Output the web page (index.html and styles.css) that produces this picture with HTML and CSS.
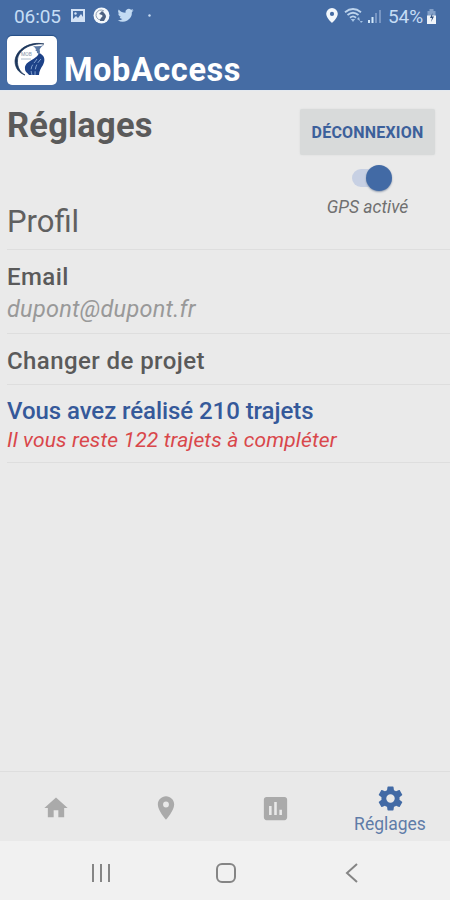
FILE: index.html
```html
<!DOCTYPE html>
<html lang="fr">
<head>
<meta charset="utf-8">
<title>MobAccess</title>
<link rel="stylesheet" href="styles.css">
</head>
<body>
<header class="header">
  <div class="status">
    <span class="time">06:05</span>
    <svg class="status-left" width="86" height="20" viewBox="0 0 86 20">
      <path fill="#d3e2f5" fill-rule="evenodd" d="M1 3h14v13H1zM3 5v9h10V5z"/>
      <path fill="#d3e2f5" d="M3 13l3-3 2 2 3-4 2 3v3H3z"/><circle cx="5.500" cy="7.500" r="1.200" fill="#d3e2f5"/>
      <circle cx="31.500" cy="9.500" r="8" fill="#f4f8fc"/>
      <path d="M34 5a5 5 0 1 0-3 9" fill="none" stroke="#8b9bb0" stroke-width="1"/>
      <path d="M32 5c2 2 4 3 4 6l-2 4h-4c0-4 4-4 2-6l-3-1z" fill="#4d6180"/>
      <path transform="translate(47 .8) scale(.72)" fill="#c3dbf3" d="M23 4.900a9 9 0 0 1-2.600.7 4.500 4.500 0 0 0 2-2.500 9 9 0 0 1-2.900 1.100A4.500 4.500 0 0 0 11.800 8.300 12.900 12.900 0 0 1 2.400 3.600a4.500 4.500 0 0 0 1.400 6.100 4.500 4.500 0 0 1-2-.6 4.500 4.500 0 0 0 3.600 4.500 4.500 4.500 0 0 1-2 .1 4.500 4.500 0 0 0 4.200 3.100A9 9 0 0 1 1 18.700a12.800 12.800 0 0 0 19.700-11.400A9 9 0 0 0 23 4.900z"/>
      <circle cx="79.500" cy="9.500" r="1.200" fill="#c8dbf1"/>
    </svg>
    <svg class="status-right" width="56" height="20" viewBox="0 0 56 20">
      <path fill="#f2f7fc" fill-rule="evenodd" d="M7 2a5.800 5.800 0 0 0-5.800 5.800C1.200 12 7 17 7 17s5.800-5 5.800-9.200A5.800 5.800 0 0 0 7 2zM7 5.800a2.100 2.100 0 1 1 0 4.200 2.100 2.100 0 0 1 0-4.200z"/>
      <g fill="none" stroke="#bdd4ed" stroke-width="1.800"><path d="M20 6.300q8-6.500 16 0M22.500 9q5.500-4.600 11 0M25 11.700q3-2.600 6 0"/></g>
      <path d="M25.800 13h4.400L28 16zM32 13l2-2 1 4zM35 15h3l-2 2z" fill="#a5c3e5"/>
      <path d="M43 14h2v3h-2zM46.500 11h2v6h-2z" fill="#d2e8fa"/><path d="M50 7h2v10h-2zM54 4h2v13h-2z" fill="#7896c3"/>
    </svg>
    <span class="percent">54%</span>
    <svg class="battery" width="11" height="18" viewBox="0 0 11 18">
      <path d="M3.500 2h4v2h2v5h-8V4h2z" fill="#829fc8"/><path d="M1 8.500h9V17H1z" fill="#f1f5fa"/><path d="M6.500 6L4 11h2l-1 4 3-5.500H6z" fill="#304f7d"/>
    </svg>
  </div>
  <div class="brand">
    <div class="logo">
      <svg width="36" height="38" viewBox="0 0 36 38">
        <path d="M32 3C18 0 4 8 3 20c0 7 4 12 10 14C8 31 5 26 5.500 19 6 9 18 2 32 3z" fill="#1c365b" stroke="#1c365b" stroke-width=".7"/>
        <path d="M23 9c5 2 4 5 1 7-5 4-12 6-11 12 0 3 3 4 4 6h10c0-4 2-7 4-10 3-6 1-10-4-12 2-3-1-4-4-3z" fill="#1d4288"/>
        <path d="M21 5q6 1 11-1-6 3-4 9l-3-1q0-4-4-7z" fill="#5c7aa5"/>
        <path d="M25 18c-3 5-8 7-5 16M29 18c-5 5-6 9-6 16" fill="none" stroke="#9bb9df" stroke-width=".8" stroke-dasharray="5 2"/>
        <text x="9" y="15" class="logo-text">MOB</text><path d="M9 18h10" stroke="#aabacb"/>
      </svg>
    </div>
    <h1 class="brand-name">MobAccess</h1>
  </div>
</header>
<main class="main">
  <section class="top">
    <div class="titles">
      <h2 class="title">Réglages</h2>
      <h3 class="subtitle">Profil</h3>
    </div>
    <div class="actions">
      <button class="logout">DÉCONNEXION</button>
      <div class="switch"><span class="knob"></span></div>
      <div class="gps">GPS activé</div>
    </div>
  </section>
  <section class="row email-row">
    <div class="label email-label">Email</div>
    <div class="email">dupont@dupont.fr</div>
  </section>
  <section class="row project-row"><div class="label project">Changer de projet</div></section>
  <section class="row trips-row">
    <div class="label trips">Vous avez réalisé 210 trajets</div>
    <div class="remaining">Il vous reste 122 trajets à compléter</div>
  </section>
</main>
<nav class="tabs">
  <div class="tab"><svg width="28" height="28" viewBox="0 0 24 24"><path d="M10 20v-6h4v6h5v-8h3L12 3 2 12h3v8z"/></svg></div>
  <div class="tab"><svg width="28" height="28" viewBox="0 0 24 24"><path d="M12 2C8.130 2 5 5.130 5 9c0 5.250 7 13 7 13s7-7.750 7-13c0-3.870-3.130-7-7-7zm0 9.500a2.500 2.500 0 0 1 0-5 2.500 2.500 0 0 1 0 5z"/></svg></div>
  <div class="tab"><svg width="31" height="31" viewBox="0 0 24 24"><path d="M19 3H5c-1.100 0-2 .9-2 2v14c0 1.100.9 2 2 2h14c1.100 0 2-.9 2-2V5c0-1.100-.9-2-2-2zM9 17H7v-7h2v7zm4 0h-2V7h2v10zm4 0h-2v-4h2v4z"/></svg></div>
  <div class="tab active">
    <svg width="29" height="29" viewBox="0 0 24 24"><path d="M19.430 12.980c.04-.32.07-.64.07-.98s-.03-.66-.07-.98l2.110-1.650c.19-.15.24-.42.12-.64l-2-3.460c-.12-.22-.39-.3-.61-.22l-2.490 1c-.52-.4-1.080-.73-1.690-.98l-.38-2.650C14.460 2.180 14.250 2 14 2h-4c-.25 0-.46.18-.49.42l-.38 2.650c-.61.25-1.170.59-1.690.98l-2.490-1c-.23-.09-.49 0-.61.22l-2 3.460c-.13.22-.07.49.12.64l2.110 1.650c-.04.32-.07.65-.07.98s.03.66.07.98l-2.110 1.650c-.19.15-.24.42-.12.64l2 3.460c.12.22.39.3.61.22l2.490-1c.52.4 1.080.73 1.690.98l.38 2.650c.03.24.24.42.49.42h4c.25 0 .46-.18.49-.42l.38-2.650c.61-.25 1.170-.59 1.690-.98l2.490 1c.23.09.49 0 .61-.22l2-3.460c.12-.22.07-.49-.12-.64l-2.110-1.650zM12 15.500a3.500 3.500 0 1 1 0-7 3.500 3.500 0 0 1 0 7z"/></svg>
    <span class="tab-label">Réglages</span>
  </div>
</nav>
<footer class="system">
  <svg width="20" height="20" viewBox="0 0 20 20"><path d="M2 1v18M10 1v18M18 1v18"/></svg>
  <svg width="22" height="22" viewBox="0 0 22 22"><rect x="2" y="2" width="18" height="18" rx="5"/></svg>
  <svg width="14" height="20" viewBox="0 0 14 20"><path d="M12 1L2 10l10 9"/></svg>
</footer>
</body>
</html>
```
FILE: styles.css
```css
* { box-sizing: border-box; }
body { margin: 0; width: 450px; height: 900px; display: flex; flex-direction: column; overflow: hidden; background: #eaeaea; color: #555; font-family: Roboto, sans-serif; }
h1, h2, h3 { margin: 0; }
svg { display: block; flex: none; }
.header { height: 91px; flex: none; background: #456ca4; border-bottom: 1px solid #e4e9ef; color: #fff; }
.status { display: flex; align-items: center; height: 34px; padding: 0 13px 2px 14px; color: #c5ddf5; }
.time { width: 56px; font-size: 19px; letter-spacing: -0.1px; }
.status-right { margin-left: auto; }
.percent { margin-left: 7px; width: 36px; font-size: 19px; letter-spacing: -0.1px; }
.battery { margin-left: 2px; }
.brand { display: flex; padding: 2px 6px 0 7px; }
.logo { display: flex; width: 50px; height: 49px; padding: 5px 0 0 5px; border-radius: 5px; background: #fff; box-shadow: 0 -1px 1px #244e85; }
.logo-text { font: 5px Roboto, sans-serif; fill: #8495aa; }
.brand-name { margin: 16px 0 0 7px; font-size: 32.500px; line-height: 36px; font-weight: 700; letter-spacing: 0.6px; }
.main { flex: 1; }
.top { display: flex; justify-content: space-between; height: 158px; padding: 18px 15px 0 7px; }
.title { font-size: 34.500px; line-height: 36px; margin-top: -2px; font-weight: 700; letter-spacing: 0.2px; color: #5a5a5a; }
.subtitle { margin-top: 61px; font-size: 31px; line-height: 36px; font-weight: 400; color: #606060; }
.actions { display: flex; flex-direction: column; align-items: center; width: 135px; }
.logout { width: 135px; height: 46px; padding: 0; border: 0; border-radius: 2px; background: #d8dada; box-shadow: 0 0 2px #d8dada; color: #3c609b; font: 700 16px/48px Roboto, sans-serif; letter-spacing: 0.2px; }
.switch { display: flex; justify-content: flex-end; align-items: center; width: 40px; height: 18px; margin: 14px 0 0 8px; border-radius: 9px; background: linear-gradient(#c7d0e3, #c7d0e3) left center / 36px 18px no-repeat; }
.knob { width: 26px; height: 26px; flex: none; border-radius: 50%; background: #426aa5; box-shadow: 0 1px 2px #8d9aad; }
.gps { margin-top: 9px; font-size: 17.500px; line-height: 22px; font-style: italic; color: #707070; }
.row { margin-left: 7px; border-top: 1px solid #dedede; }
.label { font-size: 24px; line-height: 28px; font-weight: 500; letter-spacing: 0.42px; color: #5a5a5a; }
.email-row { height: 84px; padding-top: 13px; }
.email { margin-top: 4px; font-size: 23.500px; line-height: 28px; font-style: italic; letter-spacing: 0.25px; color: #999; }
.project-row { height: 51px; padding-top: 13px; }
.trips-row { height: 79px; padding-top: 12px; border-bottom: 1px solid #dedede; }
.trips { color: #35599a; letter-spacing: -0.06px; }
.remaining { margin-top: 2px; font-size: 21px; line-height: 26px; font-style: italic; letter-spacing: 0.15px; color: #d9474b; }
.tabs { display: grid; grid-template-columns: 110px 110px 110px 120px; height: 70px; flex: none; border-top: 1px solid #dedede; background: #e9e9e9; fill: #aaa; }
.tab { display: flex; flex-direction: column; align-items: center; justify-content: center; padding: 3px 0 0 1px; }
.active { fill: #426aa5; color: #5f7ca8; padding: 12px 0 0; justify-content: flex-start; }
.tab-label { font-size: 17.500px; line-height: 22px; }
.system { display: flex; justify-content: space-between; align-items: center; height: 59px; flex: none; padding: 5px 91px 0; background: #f1f1f1; fill: none; stroke: #858585; stroke-width: 2; }
.system svg:nth-child(2) { margin-right: 4px; }
```
